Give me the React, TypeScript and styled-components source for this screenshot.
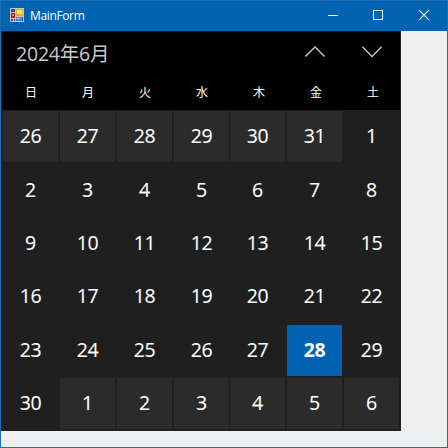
import React from "react";
import styled, { createGlobalStyle } from "styled-components";

const GlobalStyle = createGlobalStyle`
  * { box-sizing: border-box; }
  html, body { margin: 0; padding: 0; }
  body { font-family: "Open Sans", "Noto Sans CJK JP", sans-serif; overflow: hidden; }
`;

const Window = styled.div`
  width: 448px;
  height: 448px;
  display: flex;
  flex-direction: column;
  background: #efefef;
  border: 1px solid #1a6fb7;
`;

const TitleBar = styled.header`
  height: 30px;
  flex: none;
  display: flex;
  align-items: flex-start;
  padding: 0 1px 0 9px;
  background: #0063b1;
  color: #fff;
`;

const AppIcon = styled.svg`
  width: 14px;
  height: 14px;
  flex: none;
  margin: 7px 6px 0 0;
`;

const Caption = styled.span`
  flex: 1;
  padding-top: 6px;
  font-size: 12px;
  line-height: 17px;
  letter-spacing: -0.36px;
`;

const CaptionButton = styled.button`
  width: 45px;
  height: 30px;
  flex: none;
  display: flex;
  padding: 0;
  border: 0;
  background: transparent;
`;

const Calendar = styled.section`
  width: 400px;
  height: 400px;
  display: flex;
  flex-direction: column;
  background: #1f1f1f;
  border: 1px solid #1f1f1f;
`;

const CalendarHead = styled.div`
  height: 78px;
  flex: none;
  background: #000;
`;

const MonthBar = styled.div`
  height: 44px;
  display: flex;
  align-items: center;
`;

const MonthLabel = styled.span`
  flex: 1;
  padding-left: 14px;
  font-size: 19.5px;
  line-height: 28px;
  letter-spacing: -0.2px;
  color: #c8c8c8;
`;

const ArrowButton = styled.button`
  width: 57px;
  height: 44px;
  display: flex;
  padding: 0;
  border: 0;
  background: transparent;
`;

const WeekRow = styled.div`
  display: grid;
  grid-template-columns: repeat(6, 57px) 55px;
  align-items: center;
  height: 34px;
  padding-left: 1px;
`;

const Weekday = styled.span`
  width: 55px;
  text-align: center;
  color: #fff;
  font-family: "Noto Sans CJK JP", sans-serif;
  font-size: 12px;
  line-height: 18px;
  padding: 0 0 3px 1px;
`;

const DayGrid = styled.div`
  display: grid;
  grid-template-columns: 57px 57px 57px 56px 57px 57px 55px;
  grid-template-rows: 54px 53px 53px 54px 53px 51px;
  padding: 1px 0 0 1px;
`;

const Day = styled.span<{ $kind: "outside" | "current" | "today" }>`
  width: 55px;
  height: 51px;
  display: flex;
  align-items: center;
  justify-content: center;
  padding-bottom: 2px;
  color: #fff;
  font-size: 19.5px;
  font-weight: ${({ $kind }) => ($kind === "today" ? 700 : 400)};
  -webkit-text-stroke: ${({ $kind }) => ($kind === "today" ? "0" : "0.1px")} #fff;
  line-height: 26px;
  letter-spacing: ${({ $kind }) => ($kind === "today" ? "-0.5px" : "-0.35px")};
  background: ${({ $kind }) =>
    $kind === "today" ? "#0063b1" : $kind === "outside" ? "#2b2b2b" : "transparent"};
`;

const weekdays = ["日", "月", "火", "水", "木", "金", "土"];

const days = Array.from({ length: 42 }, (_, i) => {
  if (i < 6) return { n: 26 + i, kind: "outside" as const };
  if (i > 35) return { n: i - 35, kind: "outside" as const };
  const n = i - 5;
  return { n, kind: n === 28 ? ("today" as const) : ("current" as const) };
});

export default function App() {
  return (
    <>
      <GlobalStyle />
      <Window>
        <TitleBar>
          <AppIcon viewBox="0 0 14 14" shapeRendering="crispEdges">
            <rect width="14" height="14" fill="#c9c5bd" />
            <rect x="1" y="1" width="4" height="3" fill="#0063b1" />
            <rect x="1" y="5" width="4" height="5" fill="#b51f1c" />
            <rect x="2" y="6" width="2" height="2" fill="#ef7064" />
            <rect x="1" y="11" width="2" height="2" fill="#0063b1" />
            <rect x="4" y="11" width="1" height="2" fill="#0063b1" />
            <rect x="6" y="1" width="7" height="7" fill="#e5ae20" />
            <rect x="7" y="2" width="5" height="4" fill="#ffe480" />
            <rect x="6" y="9" width="6" height="4" fill="#4b86e2" />
            <rect x="7" y="10" width="3" height="1" fill="#a8ccff" />
            <rect x="12" y="9" width="1" height="4" fill="#0063b1" />
          </AppIcon>
          <Caption>MainForm</Caption>
          <CaptionButton aria-label="Minimize">
            <svg width="45" height="30" fill="none" stroke="#fff">
              <path d="M17 14.5h10" />
            </svg>
          </CaptionButton>
          <CaptionButton aria-label="Maximize">
            <svg width="45" height="30" fill="none" stroke="#fff">
              <rect x="17.5" y="9.5" width="9" height="9" />
            </svg>
          </CaptionButton>
          <CaptionButton aria-label="Close">
            <svg width="45" height="30" fill="none" stroke="#fff" strokeWidth="1.1">
              <path d="M18.2 9.2l9.6 9.6M27.8 9.2l-9.6 9.6" />
            </svg>
          </CaptionButton>
        </TitleBar>
        <Calendar>
          <CalendarHead>
            <MonthBar>
              <MonthLabel>2024年6月</MonthLabel>
              <ArrowButton aria-label="Previous month">
                <svg width="57" height="44" fill="none" stroke="#c8c8c8" strokeWidth="1.4">
                  <path d="M19.4 24.6L29 15l9.6 9.6" />
                </svg>
              </ArrowButton>
              <ArrowButton aria-label="Next month">
                <svg width="57" height="44" fill="none" stroke="#c8c8c8" strokeWidth="1.4">
                  <path d="M19.4 14.8L29 24.4l9.6-9.6" />
                </svg>
              </ArrowButton>
            </MonthBar>
            <WeekRow>
              {weekdays.map((d) => (
                <Weekday key={d}>{d}</Weekday>
              ))}
            </WeekRow>
          </CalendarHead>
          <DayGrid>
            {days.map((d, i) => (
              <Day key={i} $kind={d.kind}>
                {d.n}
              </Day>
            ))}
          </DayGrid>
        </Calendar>
      </Window>
    </>
  );
}
